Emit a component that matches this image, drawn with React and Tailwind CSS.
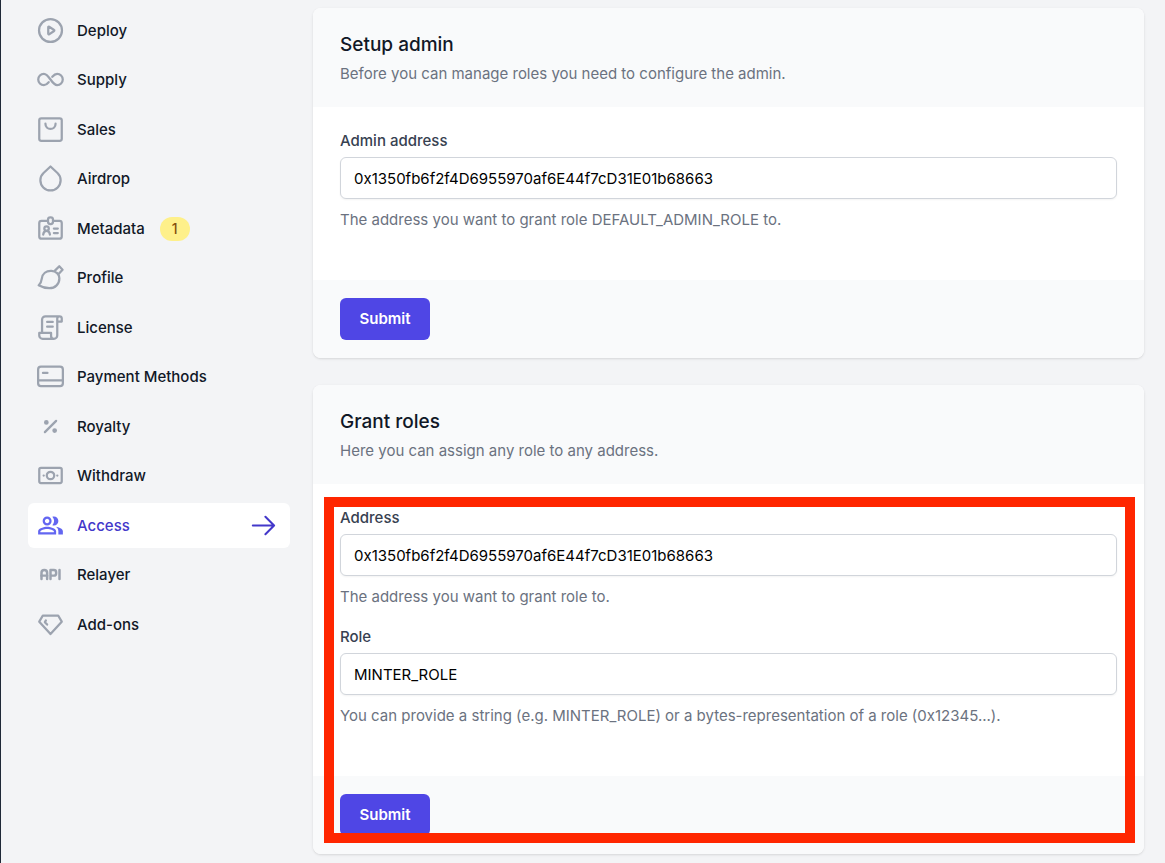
import React from "react";
import { TbApi } from "react-icons/tb";
import { MdOutlinePeopleAlt } from "react-icons/md";

function Icon({ children }) {
  return (
    <svg
      viewBox="0 0 24 24"
      className="size-[27px] shrink-0"
      fill="none"
      stroke="currentColor"
      strokeWidth="2"
      strokeLinecap="round"
      strokeLinejoin="round"
      aria-hidden="true"
    >
      {children}
    </svg>
  );
}

const items = [
  {
    label: "Deploy",
    icon: (
      <Icon>
        <circle cx="12" cy="12" r="10.2" />
        <path d="M10 9a.5.5 0 0 1 .76-.43l4.400 3a.5.5 0 0 1 0 .86l-4.400 3a.5.5 0 0 1-.76-.43z" />
      </Icon>
    ),
  },
  {
    label: "Supply",
    icon: (
      <Icon>
        <path d="M10.400 14.400C9.200 15.800 8 17 6.100 17a5 5 0 0 1 0-10C11 7 13 17 17.900 17a5 5 0 0 0 0-10c-1.900 0-3.100 1.200-4.300 2.600" />
      </Icon>
    ),
  },
  {
    label: "Sales",
    icon: (
      <Icon>
        <rect x="2" y="2" width="20" height="20" rx="1.800" />
        <path d="M7.500 6.800c0 2.800 2 4.700 4.500 4.700s4.500-1.900 4.500-4.700" />
      </Icon>
    ),
  },
  {
    label: "Airdrop",
    icon: (
      <Icon>
        <path d="M5.800 7.100 12 1.300l6.200 5.800a9 9 0 1 1-12.400 0z" />
      </Icon>
    ),
  },
  {
    label: "Metadata",
    badge: "1",
    icon: (
      <Icon>
        <path d="M9.500 5.200H4a2 2 0 0 0-2 2V19a2 2 0 0 0 2 2h16a2 2 0 0 0 2-2V7.200a2 2 0 0 0-2-2h-5.500" />
        <rect x="9.800" y="2" width="4.400" height="6" rx="2" />
        <circle cx="8.500" cy="12" r="2" />
        <path d="M5.500 17.400c.2-2 1.400-3.400 3-3.400s2.800 1.400 3 3.400M15 12h3.500M15 16h3.500" />
      </Icon>
    ),
  },
  {
    label: "Profile",
    icon: (
      <Icon>
        <path d="M1.500 18.900c2-1.600 2.400-3.200 2.700-5.700.5-4.500 4-7.200 8.600-7 4.100.1 7.100 2.800 7.100 6.500 0 5-3.600 8.800-9 8.800-3.400 0-6.500-.9-9.400-2.600zM15.500 6.300l4.300-4.300 2.900 3.100-3.900 4.300" />
      </Icon>
    ),
  },
  {
    label: "License",
    icon: (
      <Icon>
        <path d="M4.500 16.500V5a3 3 0 0 1 3-3H20a2 2 0 0 1 2 2v2.700h-3.500M20 2a2 2 0 0 0-2 2v15a3 3 0 0 1-3 3H5a3 3 0 0 1-3-3v-2.200h10.500v2.700A2.500 2.500 0 0 0 15 22M9 7h5M9 11.300h5" />
      </Icon>
    ),
  },
  {
    label: "Payment Methods",
    icon: (
      <Icon>
        <rect x="1" y="3.200" width="22" height="17.400" rx="2.500" />
        <path d="M1 15.500h22M5.300 8.800h4" />
      </Icon>
    ),
  },
  {
    label: "Royalty",
    icon: (
      <Icon>
        <path d="M17 7 7 17" />
        <circle cx="8.300" cy="8.400" r="1.100" fill="currentColor" />
        <circle cx="15.700" cy="15.600" r="1.100" fill="currentColor" />
      </Icon>
    ),
  },
  {
    label: "Withdraw",
    icon: (
      <Icon>
        <rect x="2" y="5.300" width="20" height="13.400" rx="1.500" />
        <circle cx="12" cy="12" r="3.300" />
        <path d="M5.900 12h.1M18 12h.1" />
      </Icon>
    ),
  },
  {
    label: "Access",
    active: true,
    icon: <MdOutlinePeopleAlt className="size-[27px] shrink-0" aria-hidden="true" />,
  },
  {
    label: "Relayer",
    icon: <TbApi className="size-[27px] shrink-0 stroke-[2.2px]" aria-hidden="true" />,
  },
  {
    label: "Add-ons",
    icon: (
      <Icon>
        <path d="M5.200 4h13.600L22 9.500 12 20.500 2 9.500zM7.900 8.400 7 9.900l2 2.200" />
      </Icon>
    ),
  },
];

function NavItem({ label, badge, active, icon }) {
  return (
    <li>
      <a
        href={"#" + label.toLowerCase().replace(" ", "-")}
        aria-current={active ? "page" : undefined}
        className={
          active
            ? "flex h-[45px] items-center rounded-md bg-white px-[9px] text-[#4338ca]"
            : "flex h-[45px] items-center rounded-md px-[9px] text-[#111827]"
        }
      >
        <span
          className={
            active ? "mr-[13px] mb-px text-[#6366f1]" : "mr-[13px] mb-px text-[#9ca3af]"
          }
        >
          {icon}
        </span>
        {label}
        {badge && (
          <span className="ml-[15px] rounded-full bg-[#fef08a] px-3 text-sm leading-6 text-[#854d0e]">
            {badge}
          </span>
        )}
        {active && (
          <svg
            viewBox="0 0 24 24"
            className="mr-1 ml-auto size-[27px]"
            fill="none"
            stroke="currentColor"
            strokeWidth="1.8"
            strokeLinecap="round"
            strokeLinejoin="round"
            aria-hidden="true"
          >
            <path d="M2.500 12H21M13.700 4.300l7.700 7.700-7.700 7.700" />
          </svg>
        )}
      </a>
    </li>
  );
}

function Field({ id, label, value, help }) {
  return (
    <div className="flex flex-col">
      <label htmlFor={id} className="font-medium text-[#374151]">
        {label}
      </label>
      <input
        id={id}
        type="text"
        defaultValue={value}
        aria-describedby={id + "-help"}
        className="mt-1 h-[42px] w-full rounded-md border border-[#d1d5db] bg-white px-[13px] text-black shadow-xs"
      />
      <p id={id + "-help"} className="mt-[9px] text-[#6b7280]">
        {help}
      </p>
    </div>
  );
}

function Card({ title, description, children, overlay }) {
  return (
    <section className="relative">
      <form className="overflow-hidden rounded-lg bg-white shadow-sm">
        <header className="bg-[#f9fafb] px-[27px] pt-[23px] pb-[21px]">
          <h2 className="text-[19px] leading-7 font-medium text-[#111827]">{title}</h2>
          <p className="mt-[3px] text-[#6b7280]">{description}</p>
        </header>
        <div className="flex flex-col gap-4 px-[27px] pt-[22px] pb-12">{children}</div>
        <footer className="bg-[#f9fafb] px-[27px] py-[18px]">
          <button
            type="button"
            className="block h-[42px] w-[90px] rounded-md bg-[#4f46e5] font-semibold text-white"
          >
            Submit
          </button>
        </footer>
      </form>
      {overlay}
    </section>
  );
}

export default function App() {
  return (
    <div className="flex min-h-screen border-l border-[#1f2937] bg-[#f3f4f6] pt-2 pr-[21px] pb-2 pl-[27px] font-['Inter',sans-serif] text-[15px] leading-6">
      <nav aria-label="Contract" className="mr-[23px] w-[262px] shrink-0">
        <ul className="flex h-[639px] flex-col justify-between font-medium">
          {items.map((item) => (
            <NavItem key={item.label} {...item} />
          ))}
        </ul>
      </nav>
      <main className="flex min-w-0 flex-1 flex-col gap-[27px]">
        <Card
          title="Setup admin"
          description="Before you can manage roles you need to configure the admin."
        >
          <Field
            id="admin-address"
            label="Admin address"
            value="0x1350fb6f2f4D6955970af6E44f7cD31E01b68663"
            help="The address you want to grant role DEFAULT_ADMIN_ROLE to."
          />
        </Card>
        <Card
          title="Grant roles"
          description="Here you can assign any role to any address."
          overlay={
            <div className="pointer-events-none absolute top-28 right-[9px] bottom-[11px] left-[11px] border-10 border-[#ff2600]" />
          }
        >
          <Field
            id="grant-address"
            label="Address"
            value="0x1350fb6f2f4D6955970af6E44f7cD31E01b68663"
            help="The address you want to grant role to."
          />
          <Field
            id="grant-role"
            label="Role"
            value="MINTER_ROLE"
            help="You can provide a string (e.g. MINTER_ROLE) or a bytes-representation of a role (0x12345...)."
          />
        </Card>
      </main>
    </div>
  );
}
